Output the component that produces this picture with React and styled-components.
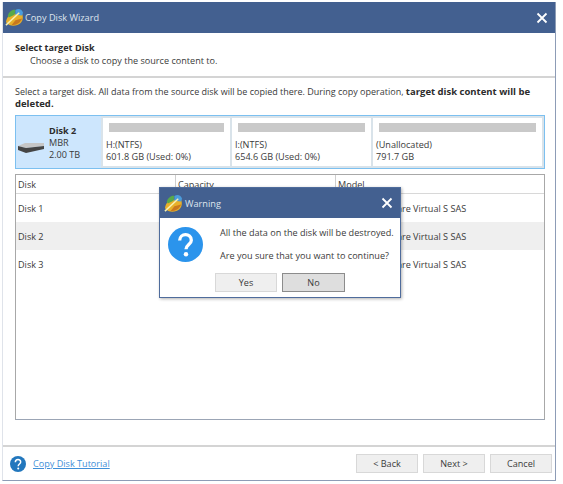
import styled, { createGlobalStyle } from 'styled-components';

const GlobalStyle = createGlobalStyle`
  html, body { margin: 0; padding: 0; background: #fff; }
  body { font-family: "Open Sans", "Noto Sans", sans-serif; font-size: 9.1px; color: #3a3a3a; }
`;

const Page = styled.div`
  width: 563px;
  height: 484px;
  padding: 2px 7px 3px 2px;
  box-sizing: border-box;
`;

const Wizard = styled.div`
  position: relative;
  height: 100%;
  display: flex;
  flex-direction: column;
  box-sizing: border-box;
  border: 1px solid #8d9cb6;
  border-top: 0;
  border-left-color: #dfe3ea;
  background: #fff;
`;

const TitleBar = styled.div`
  flex: none;
  display: flex;
  align-items: center;
  height: ${p => p.$small ? 30 : 31}px;
  padding: 0 6px 0 ${p => p.$small ? 4 : 2}px;
  background: #436090;
  color: #dfe5ee;
  font-size: 9.2px;
`;

const TitleText = styled.span`
  margin-left: ${p => p.$gap}px;
  flex: 1;
`;

const Close = styled.button`
  border: 0;
  padding: 0;
  background: none;
  display: flex;
  cursor: pointer;
`;

const Header = styled.div`
  flex: none;
  height: 45px;
  box-sizing: border-box;
  padding: 8px 12px 0;
  border-bottom: 2px solid #d4d4d4;
  line-height: 13px;
`;

const HeaderTitle = styled.div`
  font-weight: 700;
  color: #2c2c2c;
`;

const HeaderSub = styled.div`
  padding-left: 15px;
`;

const Body = styled.div`
  flex: none;
  display: flex;
  flex-direction: column;
  padding: 8px 10px 0 12px;
`;

const Intro = styled.p`
  margin: 0 0 5px;
  font-size: 9px;
  line-height: 12px;
  b { color: #2c2c2c; font-size: 9.5px; }
`;

const DiskStrip = styled.div`
  flex: none;
  display: flex;
  gap: 2px;
  height: 54px;
  box-sizing: border-box;
  padding: 2px;
  border: 1px solid #7cc0f0;
  background: #d9e3ea;
`;

const DiskInfo = styled.div`
  flex: none;
  width: 85px;
  margin: -2px 0 -2px -2px;
  padding: 2px 0 0 2px;
  box-sizing: border-box;
  display: flex;
  align-items: center;
  background: #cde6fd;
  line-height: 12px;
`;

const DiskLabels = styled.div`
  margin-left: 5px;
  strong { display: block; color: #2c2c2c; }
`;

const DriveSvg = styled.svg`
  flex: none;
  margin-top: 10px;
`;

const Partition = styled.div`
  width: ${p => p.$width}px;
  flex: ${p => p.$grow ? 1 : 'none'};
  box-sizing: border-box;
  padding: 5px 3px 0;
  background: #fff;
  line-height: 12px;
`;

const UsageBar = styled.div`
  height: 9px;
  margin: 0 3px 7px;
  background: #c9c9c9;
`;

const DiskTable = styled.div`
  flex: none;
  margin-top: 5px;
  height: 246px;
  box-sizing: border-box;
  border: 1px solid #a8a8a8;
  border-bottom-color: #9ba5b5;
`;

const Row = styled.div`
  display: grid;
  grid-template-columns: 159px 160px 1fr;
  align-items: center;
  box-sizing: border-box;
  height: ${p => p.$head ? 19 : 28}px;
  background: ${p => p.$shaded ? '#efefef' : 'transparent'};
  border-bottom: ${p => p.$head ? '1px solid #d8d8d8' : '0'};
`;

const Cell = styled.div`
  padding-left: 2px;
  height: 100%;
  display: flex;
  align-items: center;
  white-space: nowrap;
  border-left: ${p => p.$rule ? '1px solid #cfcfcf' : '0'};
`;

const Footer = styled.div`
  flex: 1;
  margin-top: 25px;
  display: flex;
  align-items: center;
  padding: 0 3px 0 7px;
  border-top: 2px solid #d4d4d4;
`;

const TutorialLink = styled.a`
  margin-left: 7px;
  flex: 1;
  color: #3f8fd8;
  text-decoration: underline;
`;

const Button = styled.button`
  width: ${p => p.$width || 62}px;
  height: 19px;
  margin-left: ${p => p.$gap ?? 5}px;
  padding: 0;
  font: inherit;
  color: #3a3a3a;
  background: ${p => p.$active ? '#dedede' : '#efefef'};
  border: 1px solid ${p => p.$active ? '#8c8c8c' : '#d8d8d8'};
  cursor: pointer;
`;

const Dialog = styled.div`
  position: absolute;
  left: 156px;
  top: 185px;
  width: 242px;
  height: 111px;
  box-sizing: border-box;
  display: flex;
  flex-direction: column;
  background: #fff;
  border: 1px solid #4f6c9c;
  box-shadow: 1px 1px 3px rgba(0, 0, 0, .3);
`;

const DialogBody = styled.div`
  flex: 1;
  display: grid;
  grid-template-columns: 60px 1fr;
  padding-top: 9px;
`;

const QuestionWrap = styled.div`
  padding: 0 0 0 8px;
`;

const Message = styled.p`
  margin: 0 0 11px;
  line-height: 12px;
  white-space: nowrap;
`;

const DialogButtons = styled.div`
  display: flex;
  padding: 0 0 7px 55px;
`;

const Logo = () => (
  <svg width="19" height="19" viewBox="0 0 20 20">
    <path d="M1 15 C2 8 6 6 9 6 L18 6 C20 11 18 16 13 18 C9 19 4 19 1 15 Z" fill="#e7b02a" />
    <path d="M3 8 C4 4 8 1 11 2 L10 7 L4 10 Z" fill="#58a94a" />
    <path d="M11 2 C14 0 18 1 19 5 L18 8 L11 7 Z" fill="#4b9cdc" />
    <path d="M1 18 L15 5" stroke="#f7f0b0" strokeWidth="1.6" fill="none" />
    <path d="M7 18 C12 18 16 16 18 11 L11 13 Z" fill="#c9781e" />
  </svg>
);

const CloseIcon = () => (
  <svg width="14" height="14" viewBox="0 0 14 14">
    <path d="M2.5 2.5 L11.5 11.5 M11.5 2.5 L2.5 11.5" stroke="#fff" strokeWidth="1.8" />
  </svg>
);

const QuestionIcon = ({ size, fill }) => (
  <svg width={size} height={size} viewBox="0 0 36 36">
    <circle cx="18" cy="18" r="18" fill={fill} />
    <path d="M12 14 C12 6 24 6 24 13.5 C24 18 18.5 18 18.5 23" fill="none" stroke="#fff" strokeWidth="3.4" />
    <circle cx="18.5" cy="28" r="2.3" fill="#fff" />
  </svg>
);

const DriveIcon = () => (
  <DriveSvg width="26" height="10" viewBox="0 0 26 10">
    <path d="M0 3 L7 0 L26 0 L26 3 L8 5 Z" fill="#c6c6c6" />
    <path d="M0 3 L8 5 L26 3 L26 6 L8 10 L0 7 Z" fill="#454545" />
  </DriveSvg>
);

const disks = ['Disk 1', 'Disk 2', 'Disk 3'];

export default function App() {
  return (
    <Page>
      <GlobalStyle />
      <Wizard>
        <TitleBar>
          <Logo />
          <TitleText $gap={1}>Copy Disk Wizard</TitleText>
          <Close><CloseIcon /></Close>
        </TitleBar>
        <Header>
          <HeaderTitle>Select target Disk</HeaderTitle>
          <HeaderSub>Choose a disk to copy the source content to.</HeaderSub>
        </Header>
        <Body>
          <Intro>
            Select a target disk. All data from the source disk will be copied there. During copy operation, <b>target disk content will be deleted.</b>
          </Intro>
          <DiskStrip>
            <DiskInfo>
              <DriveIcon />
              <DiskLabels>
                <strong>Disk 2</strong>
                MBR<br />2.00 TB
              </DiskLabels>
            </DiskInfo>
            <Partition $width={127}>
              <UsageBar />
              H:(NTFS)<br />601.8 GB (Used: 0%)
            </Partition>
            <Partition $width={139}>
              <UsageBar />
              I:(NTFS)<br />654.6 GB (Used: 0%)
            </Partition>
            <Partition $grow>
              <UsageBar />
              (Unallocated)<br />791.7 GB
            </Partition>
          </DiskStrip>
          <DiskTable>
            <Row $head>
              <Cell>Disk</Cell>
              <Cell $rule>Capacity</Cell>
              <Cell $rule>Model</Cell>
            </Row>
            {disks.map((d, i) => (
              <Row key={d} $shaded={i === 1}>
                <Cell>{d}</Cell>
                <Cell />
                <Cell>VMware, VMware Virtual S SAS</Cell>
              </Row>
            ))}
          </DiskTable>
        </Body>
        <Footer>
          <QuestionIcon size={16} fill="#2277bd" />
          <TutorialLink href="#">Copy Disk Tutorial</TutorialLink>
          <Button $gap={0}>&lt; Back</Button>
          <Button>Next &gt;</Button>
          <Button>Cancel</Button>
        </Footer>
        <Dialog>
          <TitleBar $small>
            <Logo />
            <TitleText $gap={2}>Warning</TitleText>
            <Close><CloseIcon /></Close>
          </TitleBar>
          <DialogBody>
            <QuestionWrap>
              <QuestionIcon size={35} fill="#2b94ec" />
            </QuestionWrap>
            <div>
              <Message>All the data on the disk will be destroyed.</Message>
              <Message>Are you sure that you want to continue?</Message>
            </div>
          </DialogBody>
          <DialogButtons>
            <Button $gap={0}>Yes</Button>
            <Button $active $gap={5} $width={63}>No</Button>
          </DialogButtons>
        </Dialog>
      </Wizard>
    </Page>
  );
}
